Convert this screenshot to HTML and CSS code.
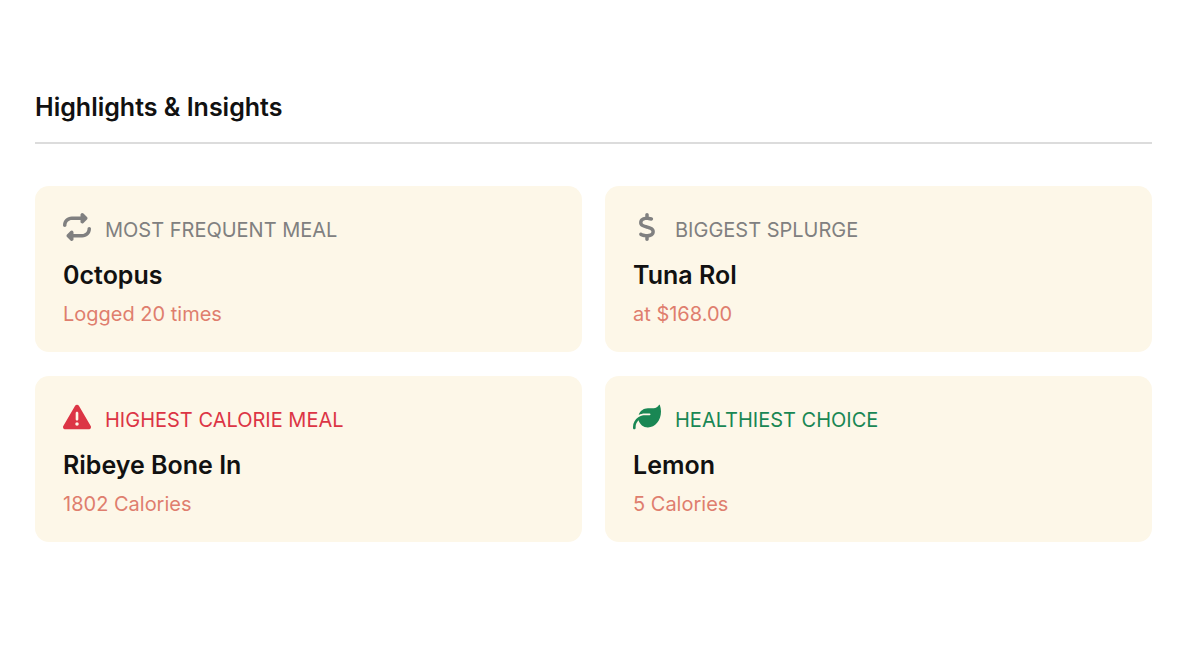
FILE: index.html
```html
<!DOCTYPE html>
<html lang="en">
  <head>
    <meta charset="utf-8">
    <meta name="viewport" content="width=device-width, initial-scale=1">
    <title>Highlights &amp; Insights</title>
    <link rel="stylesheet" href="styles.css">
  </head>
  <body>
    <main class="insights">
      <h1 class="insights-title">Highlights &amp; Insights</h1>

      <div class="insights-grid">
        <section class="card">
          <h2 class="card-label">
            <svg class="icon" viewBox="0 0 512 512" aria-hidden="true"><path d="M0 224c0 17.7 14.3 32 32 32s32-14.3 32-32c0-53 43-96 96-96H320v32c0 12.9 7.8 24.6 19.8 29.6s25.7 2.2 34.9-6.9l64-64c12.5-12.5 12.5-32.8 0-45.3l-64-64c-9.2-9.2-22.9-11.9-34.9-6.9S320 19.1 320 32V64H160C71.6 64 0 135.6 0 224zm512 64c0-17.7-14.3-32-32-32s-32 14.3-32 32c0 53-43 96-96 96H192V352c0-12.9-7.8-24.6-19.8-29.6s-25.7-2.2-34.9 6.9l-64 64c-12.5 12.5-12.5 32.8 0 45.3l64 64c9.2 9.2 22.9 11.9 34.9 6.9s19.8-16.6 19.8-29.6V448H352c88.4 0 160-71.6 160-160z"/></svg>
            <span>MOST FREQUENT MEAL</span>
          </h2>
          <p class="card-value">0ctopus</p>
          <p class="card-detail">Logged 20 times</p>
        </section>

        <section class="card">
          <h2 class="card-label">
            <svg class="icon" viewBox="-96 0 512 512" aria-hidden="true"><path d="M160 0c17.7 0 32 14.3 32 32V67.7c1.6 .2 3.1 .4 4.7 .7c.4 .1 .7 .1 1.1 .2l48 8.8c17.4 3.2 28.9 19.9 25.7 37.2s-19.9 28.9-37.2 25.7l-47.5-8.7c-31.3-4.6-58.9-1.5-78.3 6.2s-27.2 18.3-29 28.1c-2 10.7-.5 16.7 1.2 20.4c1.8 3.9 5.5 8.3 12.8 13.2c16.3 10.7 41.3 17.7 73.7 26.3l2.9 .8c28.6 7.6 63.6 16.8 89.6 33.8c14.2 9.3 27.6 21.9 35.9 39.5c8.5 17.9 10.3 37.9 6.4 59.2c-6.9 38-33.1 63.4-65.6 76.7c-13.7 5.6-28.6 9.2-44.4 11V480c0 17.7-14.3 32-32 32s-32-14.3-32-32V445.1c-.4-.1-.9-.1-1.3-.2l-.2 0 0 0c-24.4-3.8-64.5-14.3-91.5-26.3c-16.1-7.2-23.4-26.1-16.2-42.2s26.1-23.4 42.2-16.2c20.9 9.3 55.3 18.5 75.2 21.6c31.9 4.7 58.2 2 76-5.3c16.9-6.9 24.6-16.9 26.8-28.9c1.9-10.6 .4-16.7-1.3-20.4c-1.9-4-5.6-8.4-13-13.3c-16.4-10.7-41.5-17.7-74-26.3l-2.8-.7 0 0C119.4 279.3 84.4 270 58.4 253c-14.2-9.3-27.5-22-35.8-39.6c-8.4-17.9-10.1-37.9-6.1-59.2C23.7 116 52.3 91.2 84.8 78.3c13.3-5.3 27.9-8.9 43.2-11V32c0-17.7 14.3-32 32-32z"/></svg>
            <span>BIGGEST SPLURGE</span>
          </h2>
          <p class="card-value">Tuna Rol</p>
          <p class="card-detail">at $168.00</p>
        </section>

        <section class="card">
          <h2 class="card-label card-label-danger">
            <svg class="icon" viewBox="0 0 512 512" aria-hidden="true"><path d="M256 32c14.2 0 27.3 7.5 34.5 19.8l216 368c7.3 12.4 7.3 27.7 .2 40.1S486.3 480 472 480H40c-14.3 0-27.6-7.7-34.7-20.1s-7-27.8 .2-40.1l216-368C228.7 39.5 241.8 32 256 32zm0 128c-13.3 0-24 10.7-24 24V296c0 13.3 10.7 24 24 24s24-10.7 24-24V184c0-13.3-10.7-24-24-24zm32 224a32 32 0 1 0 -64 0 32 32 0 1 0 64 0z"/></svg>
            <span>HIGHEST CALORIE MEAL</span>
          </h2>
          <p class="card-value">Ribeye Bone In</p>
          <p class="card-detail">1802 Calories</p>
        </section>

        <section class="card">
          <h2 class="card-label card-label-success">
            <svg class="icon" viewBox="0 0 512 512" aria-hidden="true"><path d="M272 96c-78.6 0-145.1 51.5-167.7 122.5c33.6-17 71.5-26.5 111.7-26.5h88c8.8 0 16 7.2 16 16s-7.2 16-16 16H288 216s0 0 0 0c-16.6 0-32.7 1.9-48.3 5.4c-25.9 5.9-49.9 16.4-71.4 30.7c0 0 0 0 0 0C38.3 298.8 0 364.9 0 440v16c0 13.3 10.7 24 24 24s24-10.7 24-24V440c0-48.7 20.7-92.5 53.8-123.2C121.6 392.3 190.3 448 272 448l1 0c132.1-.7 239-130.9 239-291.4c0-42.6-7.5-83.1-21.1-119.6c-2.6-6.9-12.7-6.6-16.2-.1C455.9 72.1 418.7 96 376 96L272 96z"/></svg>
            <span>HEALTHIEST CHOICE</span>
          </h2>
          <p class="card-value">Lemon</p>
          <p class="card-detail">5 Calories</p>
        </section>
      </div>
    </main>
  </body>
</html>
```
FILE: styles.css
```css
* {
    box-sizing: border-box;
}

body {
    margin: 0;
    background: #fff;
    color: #111;
    font-family: Inter, sans-serif;
}

h1, h2, p {
    margin: 0;
}

.insights {
    padding: 90px 38px 90px 35px;
}

.insights-title {
    padding-bottom: 18px;
    border-bottom: 2px solid #dcdcdc;
    font-size: 25px;
    font-weight: 600;
    line-height: 34px;
}

.insights-grid {
    display: grid;
    grid-template-columns: 1fr 1fr;
    gap: 24px 23px;
    margin-top: 42px;
}

.card {
    padding: 27px 28px 24px;
    border-radius: 14px;
    background: #fdf7e8;
}

.card-label {
    display: flex;
    align-items: flex-start;
    gap: 14px;
    color: #808080;
    font-size: 20px;
    font-weight: 400;
    line-height: 34px;
}

.card-label-danger {
    color: #dc3545;
}

.card-label-success {
    color: #198754;
}

.icon {
    flex: none;
    width: 28px;
    height: 28px;
    fill: currentColor;
}

.card-value {
    margin-top: 11px;
    font-size: 25px;
    font-weight: 600;
    line-height: 34px;
}

.card-detail {
    margin-top: 8px;
    color: #df7e6e;
    font-size: 20px;
    line-height: 28px;
}
```
